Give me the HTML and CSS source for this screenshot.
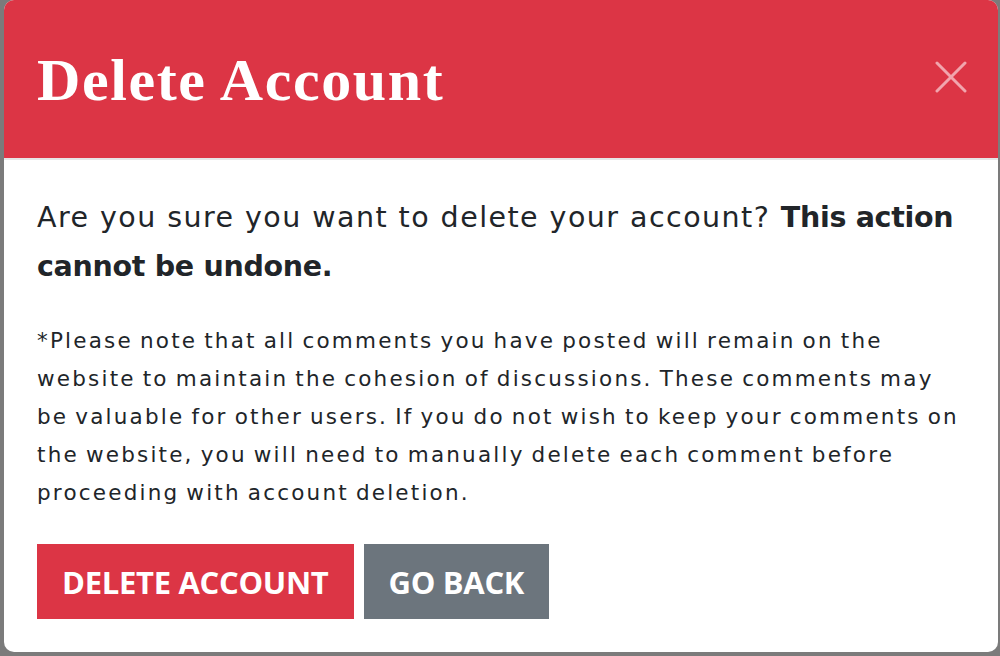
FILE: index.html
```html
<!DOCTYPE html>
<html lang="en">
<head>
<meta charset="utf-8">
<title>Delete Account</title>
<link rel="stylesheet" href="styles.css">
</head>
<body>
<div class="backdrop">
  <div class="modal" role="dialog" aria-labelledby="modal-title">
    <header class="modal-header">
      <h1 class="modal-title" id="modal-title">Delete Account</h1>
      <button class="close" aria-label="Close">
        <svg viewBox="0 0 32 32" width="32" height="32"><path d="M2 2 L30 30 M30 2 L2 30" stroke="currentColor" stroke-width="3" stroke-linecap="round" fill="none"/></svg>
      </button>
    </header>
    <div class="modal-body">
      <p class="lead">Are you sure you want to delete your account? <strong>This action cannot be undone.</strong></p>
      <p class="note">*Please note that all comments you have posted will remain on the website to maintain the cohesion of discussions. These comments may be valuable for other users. If you do not wish to keep your comments on the website, you will need to manually delete each comment before proceeding with account deletion.</p>
      <div class="actions">
        <button class="btn btn-danger">Delete Account</button>
        <button class="btn btn-secondary">Go Back</button>
      </div>
    </div>
  </div>
</div>
</body>
</html>
```
FILE: styles.css
```css
* { box-sizing: border-box; }
html, body { margin: 0; padding: 0; }
body {
  width: 1000px;
  height: 656px;
  overflow: hidden;
  background: #7b7b7b;
  font-family: "DejaVu Sans", "Noto Sans", sans-serif;
}
.backdrop {
  height: 656px;
  padding: 0 2px 0 4px;
  background: #7b7b7b;
}
.modal {
  width: 994px;
  height: 652px;
  background: #fff;
  border-radius: 10px;
  overflow: hidden;
  display: flex;
  flex-direction: column;
}
.modal-header {
  height: 160px;
  flex: none;
  background: #dc3545;
  border-bottom: 2px solid #e6e6e6;
  display: flex;
  align-items: center;
  justify-content: space-between;
  padding: 0 31px 0 33px;
}
.modal-title {
  margin: 0;
  color: #fff;
  font-family: "Liberation Serif", "DejaVu Serif", serif;
  font-weight: 700;
  font-size: 60px;
  letter-spacing: 1.6px;
  line-height: 1;
  padding-top: 2px;
}
.close {
  background: none;
  border: 0;
  padding: 0;
  width: 32px;
  height: 32px;
  margin-bottom: 4px;
  color: #f1a5ad;
  display: flex;
  cursor: pointer;
}
.modal-body {
  padding: 33px 30px 0 33px;
  color: #212529;
}
.lead {
  margin: 0;
  font-size: 28.5px;
  letter-spacing: 1.45px;
  line-height: 49px;
}
.lead strong { font-weight: 700; letter-spacing: -0.3px; }
.note {
  margin: 31px 0 0;
  font-size: 21.5px;
  letter-spacing: 2.2px;
  line-height: 38px;
  word-spacing: -2px;
}
.actions {
  display: flex;
  gap: 10px;
  margin-top: 32px;
}
.btn {
  border: 0;
  border-radius: 0;
  height: 75px;
  padding: 0 25px;
  color: #fff;
  font-family: "Open Sans", "Noto Sans", sans-serif;
  font-weight: 700;
  font-size: 31px;
  text-transform: uppercase;
  letter-spacing: -0.3px;
  cursor: pointer;
}
.btn-danger { background: #dc3545; }
.btn-secondary { background: #6c757d; }
```
